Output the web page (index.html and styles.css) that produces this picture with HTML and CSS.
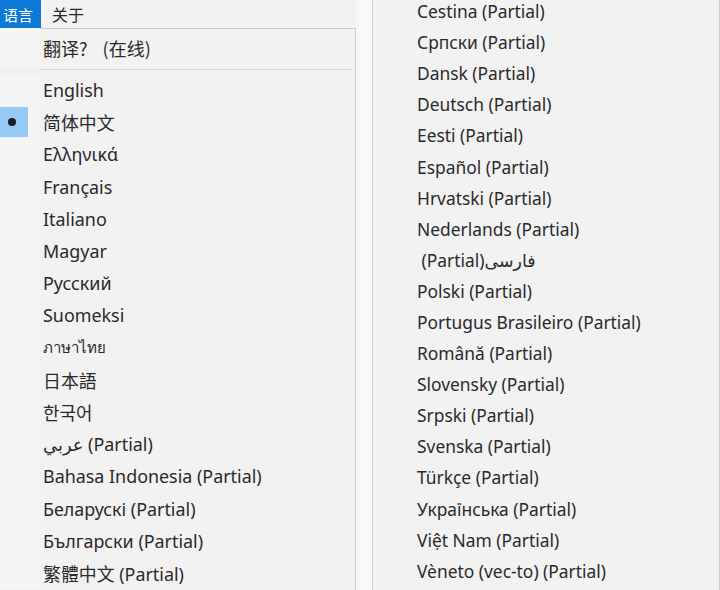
FILE: index.html
```html
<!DOCTYPE html>
<html lang="zh">
<head>
<meta charset="utf-8">
<title>语言</title>
<link rel="stylesheet" href="styles.css">
</head>
<body>
<div class="page">
  <div class="left">
    <div class="menubar">
      <div class="mb-item active">语言</div>
      <div class="mb-item">关于</div>
    </div>
    <div class="dropdown">
      <div class="row first"><span class="gutter"></span><span class="label">翻译?<span class="online">(在线)</span></span></div>
      <div class="sep"></div>
      <div class="row"><span class="gutter"></span><span class="label">English</span></div>
      <div class="row"><span class="gutter checked"><span class="dot"></span></span><span class="label">简体中文</span></div>
      <div class="row"><span class="gutter"></span><span class="label">Ελληνικά</span></div>
      <div class="row"><span class="gutter"></span><span class="label">Français</span></div>
      <div class="row"><span class="gutter"></span><span class="label">Italiano</span></div>
      <div class="row"><span class="gutter"></span><span class="label">Magyar</span></div>
      <div class="row"><span class="gutter"></span><span class="label">Русский</span></div>
      <div class="row"><span class="gutter"></span><span class="label">Suomeksi</span></div>
      <div class="row"><span class="gutter"></span><span class="label thai">ภาษาไทย</span></div>
      <div class="row"><span class="gutter"></span><span class="label">日本語</span></div>
      <div class="row"><span class="gutter"></span><span class="label">한국어</span></div>
      <div class="row"><span class="gutter"></span><span class="label">عربي (Partial)</span></div>
      <div class="row"><span class="gutter"></span><span class="label">Bahasa Indonesia (Partial)</span></div>
      <div class="row"><span class="gutter"></span><span class="label">Беларускі (Partial)</span></div>
      <div class="row"><span class="gutter"></span><span class="label">Български (Partial)</span></div>
      <div class="row"><span class="gutter"></span><span class="label">繁體中文 (Partial)</span></div>
    </div>
  </div>
  <div class="gap"></div>
  <div class="right">
    <div class="list">
      <div class="item">Cestina (Partial)</div>
      <div class="item">Српски (Partial)</div>
      <div class="item">Dansk (Partial)</div>
      <div class="item">Deutsch (Partial)</div>
      <div class="item">Eesti (Partial)</div>
      <div class="item">Español (Partial)</div>
      <div class="item">Hrvatski (Partial)</div>
      <div class="item">Nederlands (Partial)</div>
      <div class="item">&nbsp;(Partial)فارسی</div>
      <div class="item">Polski (Partial)</div>
      <div class="item">Portugus Brasileiro (Partial)</div>
      <div class="item">Română (Partial)</div>
      <div class="item">Slovensky (Partial)</div>
      <div class="item">Srpski (Partial)</div>
      <div class="item">Svenska (Partial)</div>
      <div class="item">Türkçe (Partial)</div>
      <div class="item">Українська (Partial)</div>
      <div class="item">Việt Nam (Partial)</div>
      <div class="item">Vèneto (vec-to) (Partial)</div>
    </div>
  </div>
</div>
</body>
</html>
```

FILE: styles.css
```css
html, body {
  margin: 0;
  padding: 0;
}
body {
  width: 720px;
  height: 590px;
  overflow: hidden;
  background: #f2f2f2;
  font-family: "Noto Sans", "Noto Sans CJK SC", "DejaVu Sans", sans-serif;
  font-size: 17.4px;
  color: #2a2a2a;
}
.page {
  display: flex;
  height: 590px;
}
.left {
  width: 356px;
  display: flex;
  flex-direction: column;
  font-size: 17.9px;
}
.menubar {
  height: 28px;
  display: flex;
  align-items: stretch;
  background: #f2f2f2;
}
.mb-item {
  display: flex;
  align-items: center;
  padding: 0 0 0 11px;
  font-family: "Noto Sans CJK SC", sans-serif;
  font-size: 16px;
}
.mb-item.active {
  width: 41px;
  box-sizing: border-box;
  padding-left: 3px;
  font-size: 15px;
  background: #0b79d5;
  color: #ffffff;
}
.dropdown {
  flex: 1;
  border-right: 1px solid #cdcdcd;
}
.row {
  display: flex;
  height: 32.2px;
  align-items: stretch;
}
.row.first {
  height: 38px;
}
.gutter {
  width: 40px;
  flex: none;
  display: flex;
  align-items: center;
  background: #f5f5f5;
}
.gutter.checked {
  background: linear-gradient(to right, #96c9f4 0, #96c9f4 28px, #f5f5f5 28px);
  padding: 1px 0;
  background-clip: content-box;
}
.dot {
  width: 8px;
  height: 8px;
  border-radius: 50%;
  background: #1e1e1e;
  margin-left: 8px;
}
.label {
  flex: 1;
  display: flex;
  align-items: center;
  padding-left: 3px;
  white-space: nowrap;
}
.label.thai {
  font-size: 15px;
}
.row.first .label {
  border-top: 1px solid #cdcdcd;
  font-family: "Noto Sans CJK SC", sans-serif;
  font-size: 18px;
}
.online {
  margin-left: 15px;
}
.sep {
  height: 1px;
  margin: 3px 3px 4px 40px;
  background: #d6d6d6;
}
.gap {
  width: 16px;
  background: #f8f8f8;
}
.right {
  flex: 1;
  border-left: 1px solid #d0d0d0;
  border-right: 1px solid #d0d0d0;
  overflow: hidden;
}
.list {
  margin-top: -4.5px;
  padding-left: 44px;
}
.item {
  height: 31.1px;
  display: flex;
  align-items: center;
  white-space: nowrap;
}
```
